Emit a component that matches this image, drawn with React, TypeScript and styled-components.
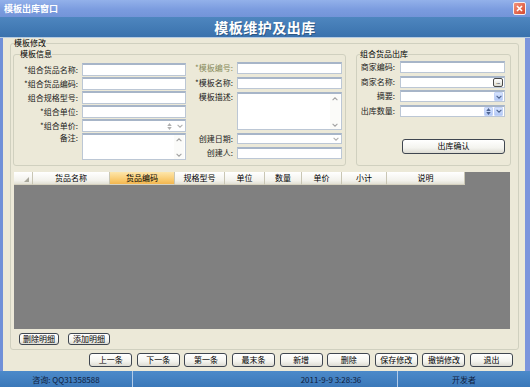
import React from 'react';
import styled, { createGlobalStyle } from 'styled-components';

const FONT = `"Noto Sans CJK SC", "Noto Sans", sans-serif`;

const GlobalStyle = createGlobalStyle`
  html, body { margin: 0; padding: 0; }
  body { background: #ece9d8; font-family: ${FONT}; }
`;

const Window = styled.div`
  width: 530px;
  height: 387px;
  display: flex;
  flex-direction: column;
  overflow: hidden;
  background: #ece9d8;
  font-family: ${FONT};
  font-size: 8px;
  color: #000;
`;

const TitleBar = styled.div`
  flex: none;
  height: 17px;
  box-sizing: border-box;
  padding: 0 4px;
  display: flex;
  align-items: center;
  justify-content: space-between;
  background: linear-gradient(#93b1ea, #7b9cdf 55%, #7394d8);
  color: #fff;
  font-size: 9px;
  font-weight: bold;
  line-height: 17px;
`;

const CloseButton = styled.div`
  width: 13px;
  height: 13px;
  box-sizing: border-box;
  border: 1px solid #f6eeee;
  border-radius: 2px;
  background: linear-gradient(135deg, #f3927a, #d6482d);
  display: flex;
  align-items: center;
  justify-content: center;
`;

const Banner = styled.div`
  flex: none;
  height: 21px;
  box-sizing: border-box;
  border-bottom: 1px solid #b5cbe2;
  display: flex;
  align-items: center;
  justify-content: center;
  background: linear-gradient(#4e86bf, #3a72ad);
  color: #fff;
  font-size: 14px;
  font-weight: bold;
  letter-spacing: 0.5px;
  text-shadow: 1px 1px 0 rgba(0, 0, 0, 0.25);
`;

const Main = styled.div`
  flex: 1;
  display: flex;
  flex-direction: column;
  align-items: flex-start;
  border-left: 3px solid #7090d8;
  border-right: 5px solid #7c95dc;
  padding: 1px 6px 0 7px;
`;

const Group = styled.fieldset<{ $pad: string }>`
  margin: 0;
  min-width: 0;
  box-sizing: border-box;
  border: 1px solid #d0d0bf;
  border-radius: 3px;
  padding: ${p => p.$pad};
`;

const Legend = styled.legend<{ $indent: number; $lh?: number }>`
  padding: 0;
  margin-left: ${p => p.$indent}px;
  font-size: 8px;
  line-height: ${p => p.$lh ?? 10}px;
  color: #000;
`;

const EditGroup = styled(Group)`
  width: 509px;
`;

const GroupBody = styled.div`
  width: 498px;
  display: flex;
  flex-direction: column;
  align-items: flex-start;
`;

const TopRow = styled.div`
  width: 498px;
  margin-top: 2px;
  display: flex;
  align-items: stretch;
`;

const InfoGroup = styled(Group)`
  width: 333px;
  flex: none;
  display: flex;
  align-items: flex-start;
`;

const OutGroup = styled(Group)`
  width: 155px;
  flex: none;
  margin-left: 10px;
`;

const ColA = styled.div`
  display: grid;
  grid-template-columns: 64px 104px;
  grid-template-rows: repeat(5, 13px) 27px;
  column-gap: 4px;
  row-gap: 1px;
  margin-top: 1px;
`;

const ColB = styled.div`
  display: grid;
  grid-template-columns: 43px 105px;
  grid-template-rows: 12px 12px 38px 11px 12px;
  column-gap: 4px;
  row-gap: 3px;
  margin-left: 4px;
`;

const OutForm = styled.div`
  display: grid;
  grid-template-columns: 35px 105px;
  grid-template-rows: repeat(4, 12px);
  column-gap: 5px;
  row-gap: 2.5px;
`;

const Label = styled.span<{ $top?: boolean; $olive?: boolean }>`
  display: flex;
  justify-content: flex-end;
  align-items: ${p => (p.$top ? 'flex-start' : 'center')};
  white-space: nowrap;
  font-size: 8px;
  line-height: 10px;
  color: ${p => (p.$olive ? '#86895a' : '#1a1a1a')};
`;

const Field = styled.div<{ $stretch?: boolean }>`
  box-sizing: border-box;
  min-width: 0;
  display: flex;
  justify-content: flex-end;
  align-items: ${p => (p.$stretch ? 'stretch' : 'center')};
  gap: 1px;
  padding-right: 1px;
  background: #fff;
  border: 1px solid #bcc7d5;
  border-top: 2px solid #a7b5c8;
`;

const ScrollBar = styled.div`
  width: 10px;
  display: flex;
  flex-direction: column;
  justify-content: space-between;
  background: #fbfbf9;
`;

const ScrollKey = styled.div`
  height: 9px;
  display: flex;
  align-items: center;
  justify-content: center;
`;

const DropKey = styled.div<{ $blue?: boolean }>`
  width: 9px;
  align-self: stretch;
  box-sizing: border-box;
  display: flex;
  flex-direction: column;
  align-items: center;
  justify-content: center;
  gap: 1px;
  border-radius: 1px;
  background: ${p => (p.$blue ? 'linear-gradient(#d6e3fd, #b2c8f6)' : 'transparent')};
  border: 1px solid ${p => (p.$blue ? '#c3d3f8' : 'transparent')};
`;

const EllipsisKey = styled.div`
  width: 10px;
  height: 9px;
  box-sizing: border-box;
  border: 1px solid #4a4a4a;
  border-radius: 2px;
  background: linear-gradient(#ffffff, #dcdcd4);
  font-size: 6px;
  line-height: 5px;
  text-align: center;
  letter-spacing: -0.5px;
`;

const ConfirmRow = styled.div`
  display: flex;
  justify-content: flex-end;
  margin-top: 22px;
`;

const Button = styled.button<{ $w: number; $h: number }>`
  width: ${p => p.$w}px;
  height: ${p => p.$h}px;
  flex: none;
  box-sizing: border-box;
  margin: 0;
  padding: 0;
  border: 1px solid #3f4650;
  border-radius: 3px;
  background: linear-gradient(#ffffff, #f4f4ef 60%, #dddcd3);
  font-family: ${FONT};
  font-size: 8px;
  line-height: 1;
  color: #000;
  display: flex;
  align-items: center;
  justify-content: center;
`;

const GridView = styled.div`
  width: 496px;
  height: 157px;
  flex: none;
  margin: 6px 0 0 1px;
  display: flex;
  flex-direction: column;
  background: #808080;
`;

const HeaderRow = styled.div`
  display: flex;
  height: 13px;
  flex: none;
`;

const HeaderCell = styled.div<{ $w: number; $active?: boolean }>`
  width: ${p => p.$w}px;
  flex: none;
  box-sizing: border-box;
  border-right: 1px solid #c9c6b4;
  border-bottom: 1px solid #d6d2c0;
  background: ${p =>
    p.$active
      ? 'linear-gradient(#fde6ab, #f8c769 70%, #f3b64f)'
      : 'linear-gradient(#ffffff, #f3f2ec 70%, #e3e1d5)'};
  display: flex;
  align-items: center;
  justify-content: center;
  font-size: 8px;
  line-height: 1;
`;

const CornerCell = styled(HeaderCell)`
  align-items: flex-end;
  justify-content: flex-end;
  padding: 0 3px 2px 0;
`;

const DetailButtons = styled.div`
  display: flex;
  gap: 9px;
  margin: 4px 0 0 6px;
`;

const NavRow = styled.div`
  width: 509px;
  box-sizing: border-box;
  display: flex;
  justify-content: flex-end;
  gap: 4.6px;
  margin-top: 3px;
  padding-right: 6px;
`;

const StatusBar = styled.div`
  flex: none;
  height: 16px;
  display: grid;
  grid-template-columns: 132px 133px 132px 1fr;
  background: linear-gradient(#4c8aca, #3b78b9);
  color: #0f203c;
  font-size: 8px;
`;

const StatusCell = styled.div<{ $divider?: boolean }>`
  display: flex;
  align-items: center;
  justify-content: center;
  border-left: ${p => (p.$divider ? '1px solid #b2cbe8' : 'none')};
`;

const Chevron = ({ up = false, color = '#a3a3a3' }: { up?: boolean; color?: string }) => (
  <svg width="6" height="4" viewBox="0 0 10 6">
    <path d={up ? 'M1 5 L5 1 L9 5' : 'M1 1 L5 5 L9 1'} fill="none" stroke={color} strokeWidth="1.8" />
  </svg>
);

const Tri = ({ up = false, color = '#a3a3a3' }: { up?: boolean; color?: string }) => (
  <svg width="5" height="3" viewBox="0 0 6 4">
    <polygon points={up ? '0,4 3,0 6,4' : '0,0 6,0 3,4'} fill={color} />
  </svg>
);

const TextArea = () => (
  <Field $stretch>
    <ScrollBar>
      <ScrollKey><Chevron up /></ScrollKey>
      <ScrollKey><Chevron /></ScrollKey>
    </ScrollBar>
  </Field>
);

const Spin = ({ blue = false }: { blue?: boolean }) => {
  const c = blue ? '#4d6390' : '#b0b0b0';
  return (
    <Field>
      <DropKey $blue={blue}>
        <Tri up color={c} />
        <Tri color={c} />
      </DropKey>
      <DropKey $blue={blue}><Chevron color={c} /></DropKey>
    </Field>
  );
};

const Combo = ({ blue = false }: { blue?: boolean }) => (
  <Field>
    <DropKey $blue={blue}><Chevron color={blue ? '#4d6390' : '#b0b0b0'} /></DropKey>
  </Field>
);

const columns = [
  { name: '货品名称', w: 77 },
  { name: '货品编码', w: 65, active: true },
  { name: '规格型号', w: 50 },
  { name: '单位', w: 40 },
  { name: '数量', w: 37 },
  { name: '单价', w: 40 },
  { name: '小计', w: 45 },
  { name: '说明', w: 78 },
];

const navButtons = ['上一条', '下一条', '第一条', '最末条', '新增', '删除', '保存修改', '撤销修改', '退出'];

export default function App() {
  return (
    <Window>
      <GlobalStyle />
      <TitleBar>
        <span>模板出库窗口</span>
        <CloseButton>
          <svg width="7" height="7" viewBox="0 0 7 7">
            <path d="M1 1 L6 6 M6 1 L1 6" stroke="#fff" strokeWidth="1.6" />
          </svg>
        </CloseButton>
      </TitleBar>
      <Banner>模板维护及出库</Banner>
      <Main>
        <EditGroup $pad="0 7px 4px 2px">
          <Legend $indent={1} $lh={8}>模板修改</Legend>
          <GroupBody>
            <TopRow>
              <InfoGroup $pad="3px 3px 5px 0">
                <Legend $indent={6}>模板信息</Legend>
                <ColA>
                  <Label>*组合货品名称:</Label>
                  <Field />
                  <Label>*组合货品编码:</Label>
                  <Field />
                  <Label>组合规格型号:</Label>
                  <Field />
                  <Label>*组合单位:</Label>
                  <Field />
                  <Label>*组合单价:</Label>
                  <Spin />
                  <Label $top>备注:</Label>
                  <TextArea />
                </ColA>
                <ColB>
                  <Label $olive>*模板编号:</Label>
                  <Field />
                  <Label>*模板名称:</Label>
                  <Field />
                  <Label $top>模板描述:</Label>
                  <TextArea />
                  <Label>创建日期:</Label>
                  <Combo />
                  <Label>创建人:</Label>
                  <Field />
                </ColB>
              </InfoGroup>
              <OutGroup $pad="2px 5px 4px 3px">
                <Legend $indent={0}>组合货品出库</Legend>
                <OutForm>
                  <Label>商家编码:</Label>
                  <Field />
                  <Label>商家名称:</Label>
                  <Field>
                    <EllipsisKey>...</EllipsisKey>
                  </Field>
                  <Label>摘要:</Label>
                  <Combo blue />
                  <Label>出库数量:</Label>
                  <Spin blue />
                </OutForm>
                <ConfirmRow>
                  <Button $w={103} $h={15}>出库确认</Button>
                </ConfirmRow>
              </OutGroup>
            </TopRow>
            <GridView>
              <HeaderRow>
                <CornerCell $w={19}>
                  <svg width="5" height="5" viewBox="0 0 5 5">
                    <polygon points="5,0 5,5 0,5" fill="#a9a89c" />
                  </svg>
                </CornerCell>
                {columns.map(c => (
                  <HeaderCell key={c.name} $w={c.w} $active={c.active}>
                    {c.name}
                  </HeaderCell>
                ))}
              </HeaderRow>
            </GridView>
            <DetailButtons>
              <Button $w={40} $h={12}>删除明细</Button>
              <Button $w={42} $h={12}>添加明细</Button>
            </DetailButtons>
          </GroupBody>
        </EditGroup>
        <NavRow>
          {navButtons.map(b => (
            <Button key={b} $w={43} $h={14}>{b}</Button>
          ))}
        </NavRow>
      </Main>
      <StatusBar>
        <StatusCell>咨询: QQ31358588</StatusCell>
        <StatusCell $divider />
        <StatusCell>2011-9-9 3:28:36</StatusCell>
        <StatusCell $divider>开发者</StatusCell>
      </StatusBar>
    </Window>
  );
}
